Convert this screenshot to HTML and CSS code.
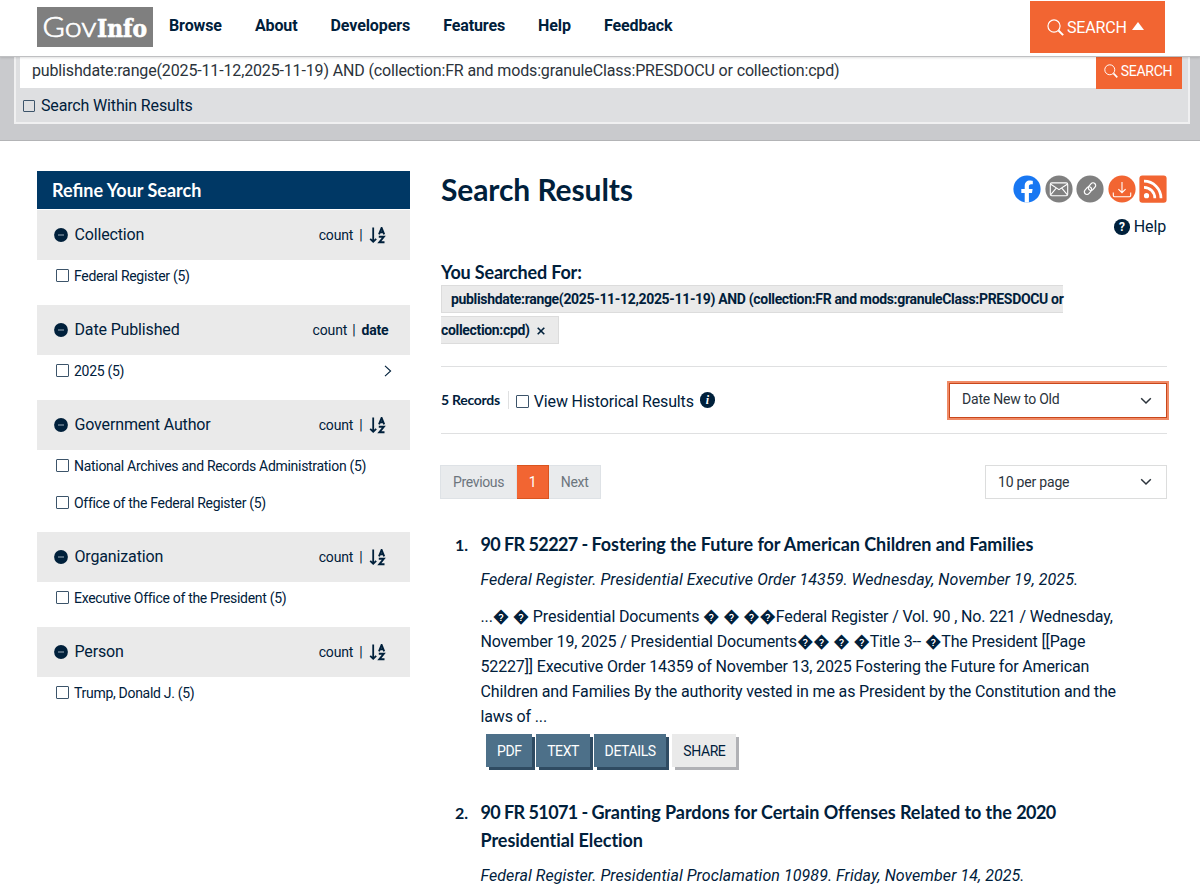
FILE: index.html
```html
<!DOCTYPE html>
<html lang="en">
<head>
    <meta charset="UTF-8">
    <meta name="viewport" content="width=device-width, initial-scale=1.0">
    <title>GovInfo - Search Results</title>
    <link rel="stylesheet" href="styles.css">
</head>
<body>
    <!-- Shared icons -->
    <svg class="sprite" width="0" height="0">
        <symbol id="icon-search" viewBox="0 0 16 16">
            <circle cx="6.6" cy="6.6" r="5.7" fill="none" stroke="currentColor" stroke-width="1.1"/>
            <path d="M10.8 10.8L15.2 15.2" stroke="currentColor" stroke-width="1.9"/>
        </symbol>
        <symbol id="icon-minus" viewBox="0 0 14 14">
            <circle cx="7" cy="7" r="6.9" fill="#00203b"/>
            <path d="M4 7h6" stroke="#8fa0b0" stroke-width="1.1"/>
        </symbol>
        <symbol id="icon-sort" viewBox="0 0 17 17">
            <path d="M4.2 .5v14M1.2 11.8l3 3 3-3" fill="none" stroke="currentColor" stroke-width="1.8"/>
            <path d="M10 7.3L12.6 .9 15.2 7.3M10.9 5.3h3.4" fill="none" stroke="currentColor" stroke-width="1.9"/>
            <path d="M9.8 9.8h5L10.3 15.3h5.2" fill="none" stroke="currentColor" stroke-width="1.9"/>
        </symbol>
        <symbol id="icon-chevron" viewBox="0 0 12 8">
            <path d="M1.2 1.2L6 6l4.8-4.8" fill="none" stroke="currentColor" stroke-width="1.5"/>
        </symbol>
    </svg>

    <!-- Top navigation -->
    <header class="topbar">
        <a class="logo" href="#">
            <svg width="116" height="40" viewBox="0 0 116 40">
                <rect width="116" height="40" fill="#7f7f7f"/>
                <text class="logo-gov" x="5.5" y="30" textLength="54" lengthAdjust="spacingAndGlyphs">Gov</text>
                <text class="logo-info" x="60" y="30" textLength="50" lengthAdjust="spacingAndGlyphs">Info</text>
            </svg>
        </a>
        <nav class="main-nav">
            <a href="#">Browse</a>
            <a href="#">About</a>
            <a href="#">Developers</a>
            <a href="#">Features</a>
            <a href="#">Help</a>
            <a href="#">Feedback</a>
        </nav>
        <button class="search-toggle">
            <svg width="17" height="17"><use href="#icon-search"/></svg>
            <span>SEARCH</span>
            <i class="caret-up"></i>
        </button>
    </header>

    <!-- Search box -->
    <section class="search-band">
        <div class="search-box">
            <div class="search-row">
                <input type="text" class="search-input" value="publishdate:range(2025-11-12,2025-11-19) AND (collection:FR and mods:granuleClass:PRESDOCU or collection:cpd)">
                <button class="search-btn">
                    <svg width="14" height="14"><use href="#icon-search"/></svg>
                    <span>SEARCH</span>
                </button>
            </div>
            <label class="within"><input type="checkbox"> Search Within Results</label>
        </div>
    </section>

    <div class="content">
        <!-- Filters -->
        <aside class="sidebar">
            <h2>Refine Your Search</h2>

            <div class="filter">
                <div class="filter-head">
                    <svg width="14" height="14"><use href="#icon-minus"/></svg>
                    <span class="filter-name">Collection</span>
                    <span class="sort">count<i>|</i><svg width="17" height="17"><use href="#icon-sort"/></svg></span>
                </div>
                <label><input type="checkbox"> Federal Register (5)</label>
            </div>

            <div class="filter">
                <div class="filter-head">
                    <svg width="14" height="14"><use href="#icon-minus"/></svg>
                    <span class="filter-name">Date Published</span>
                    <span class="sort sort-date">count<i>|</i><b>date</b></span>
                </div>
                <label><input type="checkbox"> 2025 (5)
                    <svg class="expand" width="8" height="12" viewBox="0 0 8 12"><path d="M1 .8L6.6 6 1 11.2" fill="none" stroke="currentColor" stroke-width="1.1"/></svg>
                </label>
            </div>

            <div class="filter">
                <div class="filter-head">
                    <svg width="14" height="14"><use href="#icon-minus"/></svg>
                    <span class="filter-name">Government Author</span>
                    <span class="sort">count<i>|</i><svg width="17" height="17"><use href="#icon-sort"/></svg></span>
                </div>
                <label><input type="checkbox"> National Archives and Records Administration (5)</label>
                <label><input type="checkbox"> Office of the Federal Register (5)</label>
            </div>

            <div class="filter">
                <div class="filter-head">
                    <svg width="14" height="14"><use href="#icon-minus"/></svg>
                    <span class="filter-name">Organization</span>
                    <span class="sort">count<i>|</i><svg width="17" height="17"><use href="#icon-sort"/></svg></span>
                </div>
                <label><input type="checkbox"> Executive Office of the President (5)</label>
            </div>

            <div class="filter">
                <div class="filter-head">
                    <svg width="14" height="14"><use href="#icon-minus"/></svg>
                    <span class="filter-name">Person</span>
                    <span class="sort">count<i>|</i><svg width="17" height="17"><use href="#icon-sort"/></svg></span>
                </div>
                <label><input type="checkbox"> Trump, Donald J. (5)</label>
            </div>
        </aside>

        <!-- Results -->
        <main class="results">
            <div class="results-head">
                <h1>Search Results</h1>
                <div class="tools">
                    <div class="share-icons">
                        <svg width="28" height="28" viewBox="0 0 28 28">
                            <circle cx="14" cy="14" r="13.6" fill="#1877f2"/>
                            <path d="M11.7 27.5V18H8.3v-4h3.4v-2.9c0-3.6 2.1-5.5 5.2-5.5 1.5 0 2.9.3 2.9.3v3.3h-1.7c-1.7 0-2.2 1-2.2 2.1V14h3.7l-.6 4h-3.1v9.5z" fill="#fff"/>
                        </svg>
                        <svg width="28" height="28" viewBox="0 0 28 28">
                            <circle cx="14" cy="14" r="13.6" fill="#808080"/>
                            <g fill="none" stroke="#fff" stroke-width="1.1">
                                <rect x="5.3" y="7.9" width="17.4" height="12.8" rx="1.5"/>
                                <path d="M5.8 9.2l8.2 5.4 8.2-5.4M5.8 19.6l5.4-6.4M22.2 19.6l-5.4-6.4"/>
                            </g>
                        </svg>
                        <svg width="28" height="28" viewBox="0 0 28 28">
                            <circle cx="14" cy="14" r="13.6" fill="#808080"/>
                            <g fill="none" stroke="#fff" stroke-width="1.2">
                                <rect x="-4.2" y="-2.6" width="8.4" height="5.2" rx="2.6" transform="translate(16 11.6) rotate(-48)"/>
                                <rect x="-4.2" y="-2.6" width="8.4" height="5.2" rx="2.6" transform="translate(12 15.6) rotate(-48)"/>
                            </g>
                        </svg>
                        <svg width="28" height="28" viewBox="0 0 28 28">
                            <circle cx="14" cy="14" r="13.6" fill="#f26532"/>
                            <path d="M14 7v10.6M10.4 14.1l3.6 3.6 3.6-3.6M5.3 17.4v3.1q0 1.2 1.2 1.2h15q1.2 0 1.2-1.2v-3.1" fill="none" stroke="#fff" stroke-width="1.1"/>
                        </svg>
                        <svg width="28" height="28" viewBox="0 0 28 28">
                            <rect x=".4" y=".4" width="27.2" height="27.4" rx="3" fill="#f26532"/>
                            <circle cx="7.5" cy="20.7" r="2.6" fill="#fff"/>
                            <path d="M5 12.3a10.8 10.8 0 0 1 10.8 10.9M5 6.2a17 17 0 0 1 17 17" fill="none" stroke="#fff" stroke-width="2.7"/>
                        </svg>
                    </div>
                    <a class="help" href="#"><span class="dot">?</span>Help</a>
                </div>
            </div>

            <h3>You Searched For:</h3>
            <div class="terms">
                <span class="term">publishdate:range(2025-11-12,2025-11-19) AND (collection:FR and mods:granuleClass:PRESDOCU or<br>collection:cpd) <svg width="8" height="8" viewBox="0 0 8 8"><path d="M.7 .7l6.6 6.6M7.3 .7L.7 7.3" stroke="currentColor" stroke-width="1.6"/></svg></span>
            </div>

            <div class="records">
                <strong>5 Records</strong>
                <label><input type="checkbox"> View Historical Results</label>
                <span class="dot info">i</span>
                <div class="select select-sort">Date New to Old<svg width="12" height="8"><use href="#icon-chevron"/></svg></div>
            </div>

            <div class="paging">
                <div class="pages">
                    <span>Previous</span>
                    <span class="current">1</span>
                    <span>Next</span>
                </div>
                <div class="select select-size">10 per page<svg width="12" height="8"><use href="#icon-chevron"/></svg></div>
            </div>

            <article class="result">
                <span class="num">1.</span>
                <div class="result-body">
                    <h4><span class="cite">90 FR 52227 - </span>Fostering the Future for American Children and Families</h4>
                    <p class="meta">Federal Register. Presidential Executive Order 14359. Wednesday, November 19, 2025.</p>
                    <p class="teaser">...� � Presidential Documents � � ��Federal Register / Vol. 90 , No. 221 / Wednesday,<br>November 19, 2025 / Presidential Documents�� � �Title 3-- �The President [[Page<br>52227]] Executive Order 14359 of November 13, 2025 Fostering the Future for American<br>Children and Families By the authority vested in me as President by the Constitution and the<br>laws of ...</p>
                    <div class="actions">
                        <a class="btn" href="#">PDF</a>
                        <a class="btn" href="#">TEXT</a>
                        <a class="btn" href="#">DETAILS</a>
                        <a class="btn btn-share" href="#">SHARE</a>
                    </div>
                </div>
            </article>

            <article class="result">
                <span class="num">2.</span>
                <div class="result-body">
                    <h4><span class="cite">90 FR 51071 - </span>Granting Pardons for Certain Offenses Related to the <span class="cite">2020</span><br>Presidential Election</h4>
                    <p class="meta">Federal Register. Presidential Proclamation 10989. Friday, November 14, 2025.</p>
                </div>
            </article>
        </main>
    </div>
</body>
</html>
```
FILE: styles.css
```css
* {
    box-sizing: border-box;
}
body {
    margin: 0;
    height: 884px;
    overflow: hidden;
    font-family: Roboto, sans-serif;
    font-size: 16px;
    letter-spacing: -0.15px;
    color: #00203b;
    background: #fff;
}
h1, h2, h3, h4, p {
    margin: 0;
}
h1, h2, h3, h4 {
    font-family: Lato, sans-serif;
    font-weight: bold;
}
a {
    color: inherit;
    text-decoration: none;
}
svg {
    display: block;
    flex: none;
}
button {
    border: 0;
    padding: 0;
    font-family: inherit;
    color: #fff;
    background: #f26532;
}
.sprite {
    position: absolute;
}
input[type="checkbox"] {
    appearance: none;
    flex: none;
    width: 13px;
    height: 13px;
    margin: 0;
    border: 1px solid #3c546a;
    border-radius: 1px;
    background: #fff;
}

/* top navigation */
.topbar {
    position: relative;
    z-index: 2;
    display: flex;
    align-items: flex-start;
    height: 57px;
    padding: 0 35px 0 37px;
    background: #fff;
    border-bottom: 1px solid #bfc0c2;
    box-shadow: 0 1px 2px rgba(0, 0, 0, 0.12);
}
.logo {
    margin-top: 7px;
}
.logo svg {
    overflow: visible;
}
.logo-gov {
    font: 300 27px Lato, sans-serif;
    letter-spacing: 0;
    fill: #fff;
    stroke: #fff;
    stroke-width: 0.7px;
}
.logo-info {
    font: bold 25px "DejaVu Serif", serif;
    letter-spacing: 0;
    fill: #fff;
    stroke: #fff;
    stroke-width: 0.7px;
}
.main-nav {
    display: flex;
    gap: 33px;
    margin: 16px 0 0 16px;
    font-weight: 700;
    line-height: 20px;
    letter-spacing: -0.1px;
}
.search-toggle {
    display: flex;
    align-items: center;
    width: 135px;
    height: 52px;
    margin: 1px 0 0 auto;
    padding-left: 17px;
    font-size: 16px;
    letter-spacing: -0.15px;
}
.search-toggle span {
    margin: 0 5px 0 3px;
}
.caret-up {
    margin-bottom: 3px;
    border: 6.5px solid transparent;
    border-top: 0;
    border-bottom: 8px solid #fff;
}

/* search box */
.search-band {
    height: 92px;
    margin-top: -8px;
    padding: 0 10px 0 14px;
    background: #c9cacd;
    border-bottom: 1px solid #b3b4b6;
}
.search-box {
    height: 75px;
    padding: 3px 6px 0 4px;
    background: #dedfe1;
    border: 2px solid #f0f0f1;
    border-top: 0;
}
.search-row {
    display: flex;
    align-items: flex-start;
}
.search-input {
    flex: 1;
    height: 36px;
    padding: 0 12px;
    border: 0;
    font-family: Roboto, sans-serif;
    font-size: 16px;
    letter-spacing: -0.15px;
    color: #2b333b;
}
.search-btn {
    display: flex;
    align-items: center;
    justify-content: center;
    gap: 3px;
    width: 86px;
    height: 37px;
    padding-right: 2px;
    font-size: 14px;
    letter-spacing: -0.3px;
}
.within {
    display: flex;
    align-items: center;
    gap: 5px;
    margin: 7px 0 0 3px;
    line-height: 19px;
}
.within input[type="checkbox"] {
    background: #dedfe1;
    width: 12px;
    height: 12px;
    margin-right: 1px;
}

.content {
    display: flex;
    gap: 31px;
    padding: 30px 33px 0 37px;
}

/* filters */
.sidebar {
    flex: none;
    width: 373px;
}
.sidebar h2 {
    height: 39px;
    padding-left: 15px;
    font-size: 18px;
    line-height: 38px;
    letter-spacing: 0;
    color: #fff;
    background: #003865;
    border-bottom: 1px solid #fff;
}
.filter {
    padding-bottom: 8px;
}
.filter-head {
    display: flex;
    align-items: center;
    height: 50px;
    padding: 0 24.5px 1px 17px;
    background: #eaeaea;
}
.filter-name {
    margin-left: 6.5px;
}
.sort {
    display: flex;
    align-items: center;
    margin: 1px 0 0 auto;
    font-size: 14px;
}
.sort i {
    margin: 0 6px;
    font-style: normal;
}
.sort-date {
    margin-right: -3px;
}
.sort-date i {
    margin: 0 6px 0 5px;
}
.filter label {
    display: flex;
    align-items: center;
    gap: 5px;
    height: 32px;
    margin-bottom: 5.3px;
    padding: 0 18px 1px 19px;
    font-size: 14px;
    letter-spacing: -0.3px;
}
.expand {
    margin-left: auto;
}
.filter label:last-child {
    margin-bottom: 5px;
}

/* results */
.results {
    flex: 1;
}
.results-head {
    display: flex;
    justify-content: space-between;
    height: 90px;
}
h1 {
    font-size: 30px;
    line-height: 37px;
    letter-spacing: -0.1px;
}
.tools {
    display: flex;
    flex-direction: column;
    align-items: flex-end;
    padding-top: 4px;
}
.share-icons {
    display: flex;
    gap: 3.5px;
}
.help {
    display: flex;
    align-items: center;
    gap: 4px;
    margin: 14px 1px 0 0;
    line-height: 20px;
}
.dot {
    width: 15.5px;
    height: 15.5px;
    border-radius: 50%;
    font-size: 12px;
    font-weight: bold;
    line-height: 16px;
    letter-spacing: 0;
    text-align: center;
    color: #fff;
    background: #00203b;
}
.info {
    margin-left: 6px;
    font-family: "Liberation Serif", serif;
    font-style: italic;
}
h3 {
    font-size: 18px;
    line-height: 22px;
    letter-spacing: -0.18px;
}
.terms {
    height: 83px;
    padding-top: 1px;
    font-size: 14px;
    font-weight: 700;
    line-height: 30.5px;
    letter-spacing: -0.33px;
}
.term {
    padding: 5px 13px 5px 9px;
    background: #eaeaea;
    border: 1px solid #dcdcdc;
}
.term svg {
    display: inline-block;
    margin-left: 4px;
}
.records {
    display: flex;
    align-items: center;
    height: 68px;
    border-top: 1px solid #dfe0e1;
    border-bottom: 1px solid #dfe0e1;
}
.records strong {
    padding-right: 8px;
    border-right: 1px solid #dfe0e1;
    font-family: Lato, sans-serif;
    font-size: 14px;
    line-height: 18px;
    letter-spacing: -0.28px;
}
.records label {
    display: flex;
    align-items: center;
    gap: 5px;
    margin: 2px 0 0 7px;
}
.select {
    display: flex;
    align-items: center;
    justify-content: space-between;
    margin-left: auto;
    padding: 0 14px 0 12px;
    border: 1px solid #dcdddd;
    font-size: 14px;
    letter-spacing: -0.2px;
    color: #2b333b;
    background: #fff;
}
.select-sort {
    align-items: flex-start;
    width: 218px;
    height: 35px;
    border-color: #c9471b;
    box-shadow: 0 0 0 2px #f08b66;
    line-height: 31px;
}
.select-sort svg {
    margin-top: 13px;
}
.paging {
    display: flex;
    height: 65px;
    margin-top: 31px;
}
.pages {
    display: flex;
    height: 34px;
    margin-left: -1px;
    font-size: 14px;
    line-height: 32px;
    letter-spacing: -0.35px;
    color: #6c757d;
}
.pages span {
    padding: 0 11.6px 0 12px;
    border: 1px solid #dee2e6;
    background: #e9ebed;
}
.pages span + span {
    border-left: 0;
}
.pages .current {
    color: #fff;
    background: #f26532;
    border-color: #d9541f;
}
.select-size {
    width: 182px;
    height: 34px;
}
.result {
    display: flex;
    height: 268px;
}
.num {
    width: 39.5px;
    padding-left: 14px;
    font-family: Lato, sans-serif;
    font-weight: bold;
    line-height: 30px;
}
h4 {
    font-size: 18px;
    line-height: 28px;
    letter-spacing: -0.05px;
}
.cite {
    letter-spacing: -0.58px;
}
.meta {
    margin-top: 9px;
    font-style: italic;
    line-height: 25px;
    letter-spacing: 0.07px;
}
.teaser {
    margin-top: 12px;
    line-height: 25px;
    white-space: nowrap;
}
.actions {
    display: flex;
    gap: 4px;
    margin: 5px 0 0 5.5px;
}
.btn {
    height: 33px;
    padding: 0 10.6px 0 11px;
    font-size: 14px;
    line-height: 34px;
    letter-spacing: -0.4px;
    color: #fff;
    background: #4d7089;
    box-shadow: 3px 3px 0 #2f4b62;
}
.btn-share {
    margin-left: 2px;
    color: #00203b;
    background: #eaeaea;
    box-shadow: 3px 3px 0 #b0b1b5;
}
```
